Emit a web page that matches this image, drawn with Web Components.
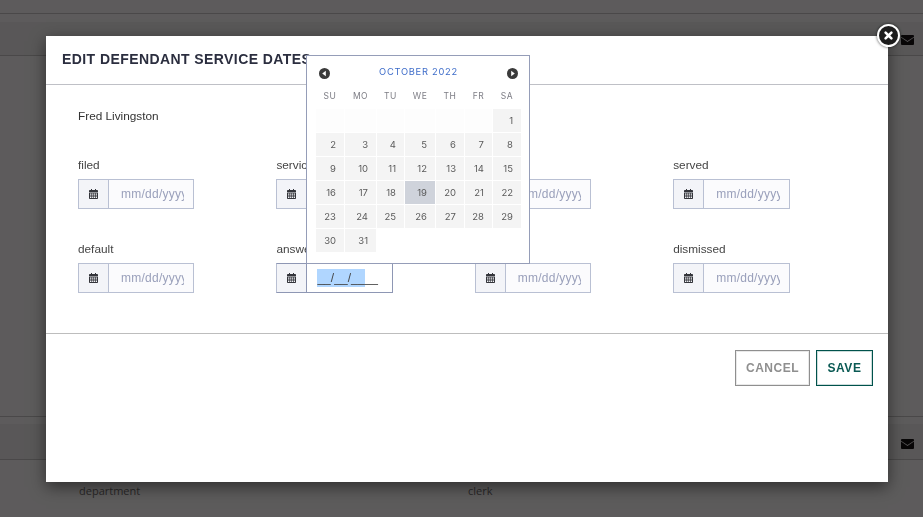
<!DOCTYPE html>
<html lang="en"><head><meta charset="utf-8"><title>Edit defendant service dates</title>
<style>
html,body{margin:0;padding:0;width:923px;height:517px;overflow:hidden;background:#fff;font-family:"Liberation Sans",Arial,sans-serif}
</style></head><body>
<x-backdrop-page></x-backdrop-page>
<x-modal-overlay>
  <x-edit-modal heading="EDIT DEFENDANT SERVICE DATES">
    <x-person-name slot="person">Fred Livingston</x-person-name>
    <x-date-field label="filed"></x-date-field>
    <x-date-field label="service" covered></x-date-field>
    <x-date-field></x-date-field>
    <x-date-field label="served"></x-date-field>
    <x-date-field label="default"></x-date-field>
    <x-date-field label="answered" focused></x-date-field>
    <x-date-field></x-date-field>
    <x-date-field label="dismissed"></x-date-field>
    <x-calendar slot="calendar"></x-calendar>
    <x-close-button slot="close"></x-close-button>
    <x-action-button slot="actions" kind="cancel">CANCEL</x-action-button>
    <x-action-button slot="actions" kind="save">SAVE</x-action-button>
  </x-edit-modal>
</x-modal-overlay>
<script>
function comp(name, html, setup){
  customElements.define(name, class extends HTMLElement{
    connectedCallback(){
      if(this.shadowRoot) return;
      const r=this.attachShadow({mode:'open'});
      r.innerHTML=typeof html==='function'?html(this):html;
      if(setup) setup(r,this);
    }
  });
}
comp('x-mail-icon',`<style>:host{display:block;width:13px;height:10px}svg{display:block}</style>
<svg width="13" height="10" viewBox="0 0 13 10"><path d="M1 0h11a1 1 0 0 1 1 1v.7L6.5 6 0 1.7V1a1 1 0 0 1 1-1z" fill="#111"/><path d="M0 2.6l6.5 4.3L13 2.6V9a1 1 0 0 1-1 1H1a1 1 0 0 1-1-1z" fill="#111"/></svg>`);
comp('x-cal-icon',`<style>:host{display:block;width:9px;height:10px}svg{display:block}</style>
<svg width="9" height="10" viewBox="0 0 9 10"><path d="M2 0h1v1h3V0h1v1h1.2a.8.8 0 0 1 .8.8V3H0V1.8A.8.8 0 0 1 .8 1H2z" fill="#33343a"/><path fill-rule="evenodd" d="M0 3.6h9v5.6a.8.8 0 0 1-.8.8H.8a.8.8 0 0 1-.8-.8zM1 4.6v1.1h1.4V4.6zM3.1 4.6v1.1h1.3V4.6zM5 4.6v1.1h1.3V4.6zM7 4.6v1.1h1V4.6zM1 6.4v1.1h1.4V6.4zM3.1 6.4v1.1h1.3V6.4zM5 6.4v1.1h1.3V6.4zM7 6.4v1.1h1V6.4zM1 8.1V9h1.4v-.9zM3.1 8.1V9h1.3v-.9zM5 8.1V9h1.3v-.9zM7 8.1V9h1v-.9z" fill="#33343a"/></svg>`);
comp('x-backdrop-page',`<style>
:host{display:block;width:923px;height:517px;background:#fff;color:#6f6d6e;font:11px "Open Sans",sans-serif}
.line{height:1px;background:#c9c9c9}
.band{display:flex;justify-content:flex-end;align-items:center;box-sizing:border-box;background:#f3f3f3;padding-right:9px;border-bottom:1px solid #c9c9c9}
.top{margin-top:13px}.s1{height:8px}.band.a{height:34px;padding-top:2px}
.gap{height:360px}
.band.b{height:36px;padding-top:4px}.s2{height:7px}
.meta{display:grid;grid-template-columns:389px auto;padding:24px 0 0 79px;line-height:14px}
</style>
<div class="line top"></div><div class="s1"></div>
<div class="band a"><x-mail-icon></x-mail-icon></div>
<div class="gap"></div>
<div class="line"></div><div class="s2"></div>
<div class="band b"><x-mail-icon></x-mail-icon></div>
<div class="meta"><span>department</span><span>clerk</span></div>`);
comp('x-modal-overlay',`<style>:host{display:block;position:fixed;inset:0;background:rgba(3,0,1,.645)}</style><slot></slot>`);
comp('x-edit-modal',el=>`<style>
:host{display:flex;flex-direction:column;position:absolute;left:46px;top:36px;width:842px;height:446px;box-sizing:border-box;background:#fff;box-shadow:0 5px 15px rgba(0,0,0,.5)}
header{box-sizing:border-box;height:49px;border-bottom:1px solid #bfc0c6;padding:15px 0 0 16px}
h1{margin:0;font:bold 14px/17px "Liberation Sans",Arial,sans-serif;letter-spacing:.42px;color:#2b2e3f}
.body{box-sizing:border-box;height:249px;border-bottom:1px solid #bdbdbd;padding:24px 0 0 32px}
.person{height:49px}
.grid{display:grid;grid-template-columns:repeat(4,198.4px);grid-auto-rows:84px}
footer{display:flex;justify-content:flex-end;gap:6px;padding:16px 15px 0 0}
</style>
<header><h1>${el.getAttribute('heading')}</h1></header>
<div class="body"><div class="person"><slot name="person"></slot></div><div class="grid"><slot></slot></div></div>
<footer><slot name="actions"></slot></footer>
<slot name="calendar"></slot><slot name="close"></slot>`);
comp('x-person-name',`<style>:host{display:block;font:11.8px/14px "Liberation Sans",Arial,sans-serif;color:#333}</style><slot></slot>`);
comp('x-date-field',el=>{
  const f=el.hasAttribute('focused'), covered=el.hasAttribute('covered');
  return `<style>
:host{display:block;font-family:"Liberation Sans",Arial,sans-serif}
.label{height:21px;font-size:11.8px;line-height:14px;color:#444}
.box{display:flex;box-sizing:border-box;width:116.4px;height:30px;border:1px solid #b9c0d3;background:#fbfbfd}
.addon{flex:none;box-sizing:border-box;width:30px;border-right:1px solid #b9c0d3;background:#f3f4f8;display:flex;align-items:center;justify-content:center}
.value{flex:1;min-width:0;overflow:hidden;white-space:nowrap;margin-right:9px;padding-left:12px;font-size:12px;line-height:28px;color:#9aa0bb;letter-spacing:.25px}
.focused{background:#fff;border-color:#8e97b4;border-left-color:#b9c0d3}
.focused .addon{border-right-color:#8e97b4}
.mask{margin-right:0;padding-left:10px;color:#444;letter-spacing:.05px;font-size:12px}
.mask b{font-weight:normal;background:#b0d6ff;padding:2px 0}
</style>
<div class="label">${el.getAttribute('label')||'&nbsp;'}</div>
<div class="box${f?' focused':''}"><div class="addon"><x-cal-icon></x-cal-icon></div>
${f?'<div class="value mask"><b>__/__/__</b>__</div>':covered?'<div class="value"></div>':'<div class="value">mm/dd/yyyy</div>'}</div>`;
});
comp('x-calendar',()=>{
  const days=['SU','MO','TU','WE','TH','FR','SA'].map(d=>`<div class="dow">${d}</div>`).join('');
  let cells='';
  for(let i=0;i<6;i++) cells+='<div class="day blank"></div>';
  for(let d=1;d<=31;d++) cells+=`<div class="day${d===19?' today':''}">${d}</div>`;
  return `<style>
:host{display:block;position:absolute;left:260px;top:19px;box-sizing:border-box;width:224px;height:209px;border:1px solid #959db8;background:#fff;padding:7px 8px 0 9px;font-family:Inter,"Liberation Sans",sans-serif}
.head{display:flex;justify-content:space-between;align-items:center;height:20px;padding:0 2.5px 0 2.5px}
.head svg{display:block}
.title{font-size:9.3px;letter-spacing:.75px;color:#3d6cc9;white-space:nowrap;margin-top:-3px}
.dow-row,.grid{display:grid;grid-template-columns:28px 31px 27px 30px 28px 27px 28px;column-gap:1px}
.dow-row{margin-top:8px;height:18px;align-items:start}
.dow{font-size:8.5px;letter-spacing:.5px;line-height:10px;text-align:center;color:#7d7d85}
.grid{grid-auto-rows:23px;row-gap:1px}
.day{background:#f4f4f4;font-size:9.5px;line-height:23px;text-align:right;padding-right:8px;color:#5a5a5a}
.blank{background:#fdfdfd}
.today{background:#cfd3db}
</style>
<div class="head">
<svg width="11" height="11" viewBox="0 0 11 11"><circle cx="5.5" cy="5.5" r="5.5" fill="#3a3a3a"/><path d="M6.8 2.8v5.4L3.2 5.5z" fill="#fff"/></svg>
<div class="title">OCTOBER 2022</div>
<svg width="11" height="11" viewBox="0 0 11 11"><circle cx="5.5" cy="5.5" r="5.5" fill="#3a3a3a"/><path d="M4.2 2.8v5.4l3.6-2.7z" fill="#fff"/></svg>
</div>
<div class="dow-row">${days}</div>
<div class="grid">${cells}</div>`;
});
comp('x-close-button',`<style>
:host{display:block;position:absolute;left:831px;top:-12px;width:23px;height:23px;box-sizing:border-box;border:2px solid #fff;border-radius:50%;background:#1c1c1c;box-shadow:0 0 3px rgba(0,0,0,.7)}
svg{display:block;margin:4px}
</style><svg width="11" height="11" viewBox="0 0 11 11"><path d="M2.6 2.6l5.8 5.8M8.4 2.6L2.6 8.4" stroke="#fff" stroke-width="2.6" stroke-linecap="round" fill="none"/></svg>`);
comp('x-action-button',el=>{
  const c=el.getAttribute('kind')==='save';
  return `<style>
:host{display:block;box-sizing:border-box;height:36px;width:${c?'57px':'75px'};border:1px solid ${c?'#00524b':'#8f8f8f'};box-shadow:inset 0 0 0 1px ${c?'rgba(0,82,75,.2)':'rgba(143,143,143,.2)'};text-align:center;font:bold 12px/34px "Liberation Sans",Arial,sans-serif;letter-spacing:.5px;color:${c?'#0a5a54':'#8f8f8f'}}
</style><slot></slot>`;
});
</script>
</body></html>
